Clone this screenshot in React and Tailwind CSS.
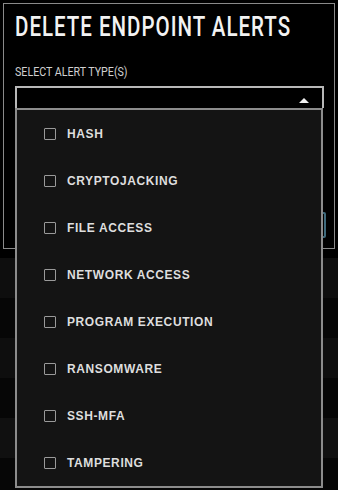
import React from "react";

const items = [
  "HASH",
  "CRYPTOJACKING",
  "FILE ACCESS",
  "NETWORK ACCESS",
  "PROGRAM EXECUTION",
  "RANSOMWARE",
  "SSH-MFA",
  "TAMPERING",
];

const rows = ["bg-[#0e0e0e]", "bg-[#060606]", "bg-[#0e0e0e]", "bg-[#060606]", "bg-[#101010]", "bg-[#060606]"];

export default function App() {
  return (
    <div className="relative w-[338px] h-[490px] overflow-hidden bg-black" style={{ fontFamily: "Roboto, 'Liberation Sans', sans-serif" }}>
      {/* page behind */}
      <div className="flex flex-col pt-[258px]">
        {rows.map((c, i) => (
          <div key={i} className={`h-[40px] ${c}`} />
        ))}
        <div className="h-[2px] bg-[#2a2a2a]" />
      </div>

      {/* modal */}
      <div className="absolute left-[3px] top-[3px] w-[332px] h-[246px] border border-[#8a8a8a] bg-black flex flex-col px-[11px] pt-[8px]">
        <h1 className="text-[27px] leading-[30px] font-medium text-[#f2f2f2] tracking-[1.3px] whitespace-nowrap origin-left scale-x-[0.76]">
          DELETE ENDPOINT ALERTS
        </h1>
        <div className="mt-[23px] text-[13px] leading-[14px] text-[#d0d0d0] whitespace-nowrap origin-left scale-x-[0.82]">
          SELECT ALERT TYPE(S)
        </div>
        <div className="relative mt-[7px] w-[309px]">
          <div className="h-[22px] border-2 border-b-0 border-[#b8b8b8] bg-black flex items-end justify-end pr-[13px] pb-[5px]">
            <svg width="10" height="5" viewBox="0 0 10 5">
              <path d="M0 5 L5 0 L10 5 Z" fill="#f0f0f0" />
            </svg>
          </div>
          {/* dropdown menu */}
          <div className="absolute left-0 top-[22px] z-10 w-[308px] border-2 border-[#8c8c8c] bg-[#141414] flex flex-col">
            {items.map((t) => (
              <div key={t} className="h-[47px] flex items-center pl-[27px] gap-[11px]">
                <span className="w-[12px] h-[12px] border-[1.5px] border-[#9a9a9a] rounded-[1px] shrink-0" />
                <span
                  className="text-[12px] font-bold tracking-[0.6px] text-[#dedede] leading-none"
                  style={{ fontFamily: "'Liberation Sans', Arial, sans-serif" }}
                >
                  {t}
                </span>
              </div>
            ))}
          </div>
        </div>
        <div className="flex justify-end mt-[104px] mr-[-3px]">
          <div className="w-[60px] h-[26px] border-2 border-[#3f6a7c] rounded-[2px]" />
        </div>
      </div>
    </div>
  );
}
